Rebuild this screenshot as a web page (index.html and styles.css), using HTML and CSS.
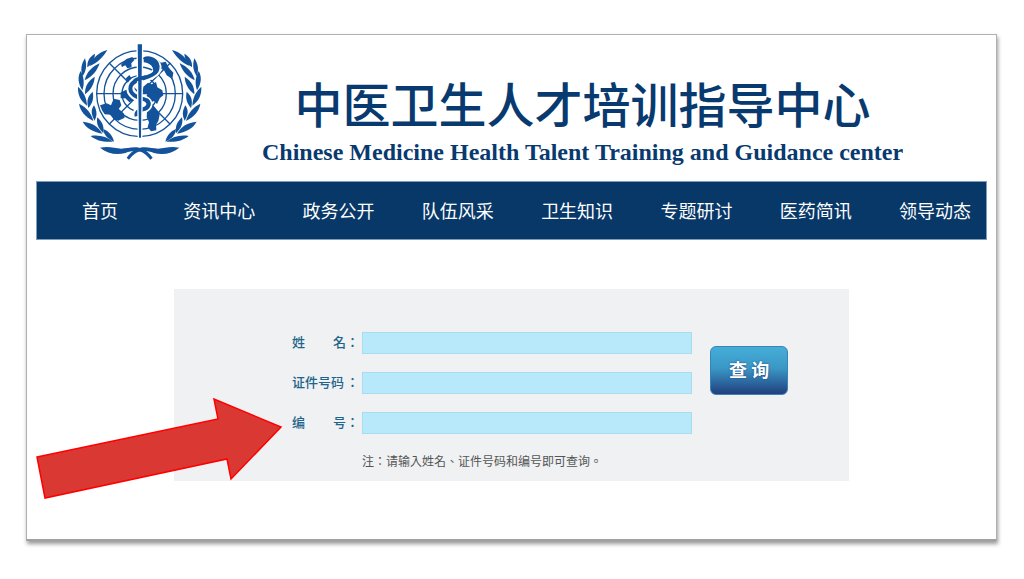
FILE: index.html
```html
<!DOCTYPE html>
<html lang="zh-CN">
<head>
<meta charset="utf-8">
<meta name="viewport" content="width=device-width, initial-scale=1">
<title>中医卫生人才培训指导中心</title>
<link rel="stylesheet" href="styles.css">
</head>
<body>
<div class="page">
  <header class="header">
    <svg class="logo" viewBox="0 0 450 405" aria-hidden="true">
      <defs>
        <g id="branch">
          <path d="M124 45C98 52 80 68 71 93C94 84 112 66 124 45Z"/>
          <path d="M87 56C70 66 63 78 64 97C78 87 86 73 87 56Z"/>
          <path d="M101 85C76 96 62 112 56 136C80 124 94 106 101 85Z"/>
          <path d="M57 70C45 88 43 106 50 124C61 107 63 90 57 70Z"/>
          <path d="M86 125C66 138 56 154 57 178C75 164 85 147 86 125Z"/>
          <path d="M44 108C34 126 36 146 49 166C56 146 54 126 44 108Z"/>
          <path d="M80 170C65 183 61 198 67 219C80 204 84 189 80 170Z"/>
          <path d="M36 155C35 179 43 197 63 212C62 189 53 170 36 155Z"/>
          <path d="M84 211C74 225 75 239 86 257C94 241 93 227 84 211Z"/>
          <path d="M39 206C43 229 56 244 82 258C76 233 61 217 39 206Z"/>
          <path d="M94 247C90 265 96 279 112 295C115 275 109 260 94 247Z"/>
          <path d="M50 260C61 280 80 290 109 296C97 274 77 262 50 260Z"/>
          <path d="M112 282C113 299 123 310 144 320C140 302 129 289 112 282Z"/>
          <path d="M74 303C91 317 111 322 141 320C122 305 100 299 74 303Z"/>
          <path d="M102 338C128 333 145 339 166 341C194 341 226 322 260 368L253 374C224 339 203 346 178 354C149 361 124 355 102 338Z"/>
        </g>
      </defs>
      <g class="logo-fill">
        <use href="#branch"/>
        <use href="#branch" transform="translate(442 0) scale(-1 1)"/>
      </g>
      <g class="logo-line">
        <circle cx="221" cy="176" r="129"/>
        <circle cx="221" cy="176" r="107"/>
        <circle cx="221" cy="176" r="80"/>
        <circle cx="221" cy="176" r="53"/>
        <path d="M92 176H350M130 85L312 267M312 85L130 267"/>
      </g>
      <g class="logo-fill">
        <path d="M165 89L181 72L199 66L205 75L196 85L197 97L184 100L178 91L168 96Z"/>
        <path d="M274 75L285 83L299 80L309 99L322 113L319 132L302 121L294 106L279 99Z"/>
        <path d="M102 211L122 205L135 211L143 191L161 195L166 211L158 222L173 235L176 248L157 257L143 253L135 239L116 238L108 226Z"/>
        <path d="M164 172L185 163L190 173L204 180L205 195L190 202L178 190L164 190Z"/>
        <path d="M232 155L246 143L257 148L270 141L274 157L289 166L292 181L282 189L273 207L264 198L251 203L237 192L244 177L230 173Z"/>
        <path d="M244 216L259 207L271 223L281 239L277 258L270 269L271 286L255 289L245 277L249 262L242 246Z"/>
        <path d="M180 130L190 120L198 132L190 142L181 139Z"/>
      </g>
      <path class="snake-edge" d="M239 76C263 72 281 89 272 108C257 133 203 126 194 154C188 178 213 188 235 193C255 203 249 218 231 223C216 226 209 233 212 244"/>
      <path class="snake" d="M239 76C263 72 281 89 272 108C257 133 203 126 194 154C188 178 213 188 235 193C255 203 249 218 231 223C216 226 209 233 212 244"/>
      <path class="snake-head" d="M233 67C250 58 278 70 280 91C281 105 270 121 253 126C267 111 266 86 233 82Z"/>
      <path class="staff" d="M213 26H230L227 310H217Z"/>
      <path class="snake-cross" d="M205 137C215 130 228 130 240 126M240 194C252 200 251 212 240 220"/>
    </svg>
    <div class="brand">
      <h1>中医卫生人才培训指导中心</h1>
      <p>Chinese Medicine Health Talent Training and Guidance center</p>
    </div>
  </header>

  <nav class="nav">
    <ul>
      <li><a href="#">首页</a></li>
      <li><a href="#">资讯中心</a></li>
      <li><a href="#">政务公开</a></li>
      <li><a href="#">队伍风采</a></li>
      <li><a href="#">卫生知识</a></li>
      <li><a href="#">专题研讨</a></li>
      <li><a href="#">医药简讯</a></li>
      <li><a href="#">领导动态</a></li>
    </ul>
  </nav>

  <main>
    <form class="search" action="#" method="post">
      <div class="fields" lang="zh-TW">
        <div class="field">
          <label for="name"><span>姓</span><span>名</span></label><i>：</i>
          <input id="name" name="name" type="text">
        </div>
        <div class="field">
          <label for="card">证件号码</label><i>：</i>
          <input id="card" name="card" type="text">
        </div>
        <div class="field">
          <label for="number"><span>编</span><span>号</span></label><i>：</i>
          <input id="number" name="number" type="text">
        </div>
        <p class="note">注：请输入姓名、证件号码和编号即可查询。</p>
      </div>
      <button type="submit">查 询</button>
    </form>
  </main>

  <svg class="arrow" viewBox="0 0 250 104" aria-hidden="true">
    <path d="M2 59L183 21L179 1L246 29L196 81L192 61L10 100Z"/>
  </svg>
</div>
</body>
</html>
```
FILE: styles.css
```css
* {
  box-sizing: border-box;
}
body {
  margin: 0;
  padding: 34px 27px 38px 26px;
  background-color: #fff;
  font-family: "Noto Sans CJK SC", sans-serif;
}
.page {
  position: relative;
  padding: 0 9px 58px;
  border: 1px solid #b0b0b0;
  border-bottom: 2px solid #a0a0a0;
  box-shadow: 1px 3px 4px rgba(0, 0, 0, 0.4);
}
.header {
  display: flex;
  align-items: flex-start;
  height: 146px;
  padding-left: 30px;
}
.logo {
  flex: none;
  width: 150px;
  height: 135px;
}
.logo-fill {
  fill: #12539b;
}
.logo-line {
  fill: none;
  stroke: #12539b;
  stroke-width: 4;
}
.snake,
.snake-edge {
  fill: none;
  stroke: #12539b;
  stroke-width: 12;
}
.snake-edge {
  stroke: #fff;
  stroke-width: 24;
}
.snake-head {
  fill: #12539b;
}
.staff {
  fill: #12539b;
  stroke: #fff;
  stroke-width: 4;
}
.snake-cross {
  fill: none;
  stroke: #12539b;
  stroke-width: 11;
}
.brand {
  padding: 40px 0 0 46px;
  color: #083a70;
  white-space: nowrap;
}
.brand h1 {
  margin: 0;
  font-size: 48px;
  font-weight: 500;
  line-height: 54px;
  text-align: center;
}
.brand p {
  margin: 8px 0 0;
  font-family: "Liberation Serif", serif;
  font-size: 24px;
  font-weight: bold;
  line-height: 30px;
}
.nav {
  background-color: #083868;
  border: 1px solid #7f9dbc;
  padding: 0 15px 0 27px;
}
.nav ul {
  display: flex;
  justify-content: space-between;
  list-style: none;
  margin: 0;
  padding: 0;
}
.nav li {
  min-width: 72px;
  text-align: center;
}
.nav a {
  color: #fff;
  font-size: 18px;
  line-height: 57px;
  text-decoration: none;
}
.search {
  display: flex;
  width: 71%;
  margin: 49px auto 0;
  padding: 43px 61px 11px 118px;
  background-color: #eff1f3;
}
.fields {
  flex: 1;
}
.field {
  display: flex;
  align-items: center;
  height: 22px;
  margin-bottom: 18px;
  color: #1f648a;
  font-family: "Noto Sans CJK TC", sans-serif;
  font-size: 13px;
  font-weight: 500;
  line-height: 18px;
}
.field label {
  display: flex;
  justify-content: space-between;
  width: 54px;
}
.field label,
.field i {
  padding-bottom: 3px;
}
.field i {
  width: 16px;
  font-style: normal;
}
.field input {
  flex: 1;
  min-width: 0;
  height: 22px;
  padding: 0 6px;
  border: 1px solid #a9dcf0;
  background-color: #b8e9fa;
  font-size: 13px;
}
.note {
  margin: 0 0 0 70px;
  color: #555;
  font-family: "Noto Sans CJK TC", sans-serif;
  font-size: 12px;
  line-height: 18px;
}
.search button {
  width: 78px;
  height: 49px;
  margin: 14px 0 0 18px;
  padding: 0 0 4px;
  border: 1px solid #3a83b5;
  border-radius: 6px;
  background: linear-gradient(#45aed8, #3a97c6 45%, #21407f);
  color: #fff;
  font-family: "Noto Sans CJK SC", sans-serif;
  font-size: 18px;
  font-weight: bold;
  text-shadow: 0 0 2px #1c3e7c;
}
.arrow {
  position: absolute;
  left: 8px;
  top: 363px;
  width: 250px;
  height: 104px;
}
.arrow path {
  fill: #da3832;
  stroke: #fe0000;
  stroke-width: 1.5;
}
```
